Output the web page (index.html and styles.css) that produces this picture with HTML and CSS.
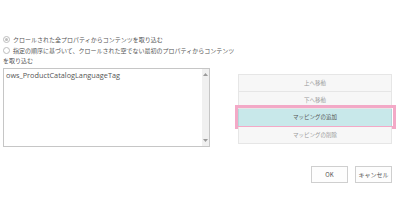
FILE: index.html
```html
<!DOCTYPE html>
<html lang="ja">
<head>
<meta charset="utf-8">
<link rel="stylesheet" href="styles.css">
</head>
<body>
<div class="page">
  <div class="main">
    <div class="left">
      <div class="opt"><span class="radio checked"></span>クロールされた全プロパティからコンテンツを取り込む</div>
      <div class="opt"><span class="radio"></span>指定の順序に基づいて、クロールされた空でない最初のプロパティからコンテンツを取り込む</div>
      <div class="list">
        <div class="list-text">ows_ProductCatalogLanguageTag</div>
        <div class="scroll">
          <svg width="5" height="3" viewBox="0 0 5 3"><path d="M0 3 L2.5 0 L5 3Z" fill="#9a9a9a"/></svg>
          <svg width="5" height="3" viewBox="0 0 5 3"><path d="M0 0 L2.5 3 L5 0Z" fill="#9a9a9a"/></svg>
        </div>
      </div>
    </div>
    <div class="right">
      <div class="btn">上へ移動</div>
      <div class="btn">下へ移動</div>
      <div class="btn active">マッピングの追加<span class="mark"></span></div>
      <div class="btn">マッピングの削除</div>
    </div>
  </div>
  <div class="footer">
    <div class="fbtn">OK</div>
    <div class="fbtn">キャンセル</div>
  </div>
</div>
</body>
</html>
```
FILE: styles.css
```css
html, body {
  margin: 0;
  padding: 0;
  background: #ffffff;
}
body {
  width: 400px;
  height: 215px;
  overflow: hidden;
  font-family: "Noto Sans CJK JP", "Noto Sans", sans-serif;
  font-size: 6px;
  color: #555555;
}
.page {
  padding: 35px 0 0 3px;
}
.main {
  display: flex;
}
.left {
  width: 234px;
}
.opt {
  line-height: 10px;
  margin-bottom: 0.5px;
}
.radio {
  display: inline-block;
  width: 7px;
  height: 7px;
  border: 1px solid #bdbdbd;
  border-radius: 50%;
  box-sizing: border-box;
  vertical-align: -1px;
  margin-right: 3px;
  background: #fff;
  position: relative;
}
.radio.checked::after {
  content: "";
  position: absolute;
  left: 1px;
  top: 1px;
  width: 3px;
  height: 3px;
  border-radius: 50%;
  background: #bdbdbd;
}
.list {
  margin-top: 2px;
  width: 207px;
  height: 79px;
  border: 1px solid #c6c6c6;
  box-sizing: border-box;
  display: flex;
}
.list-text {
  flex: 1;
  padding: 1px 2px;
  font-family: "Open Sans", "Noto Sans", sans-serif;
  font-size: 7.3px;
  color: #555;
  line-height: 10px;
}
.scroll {
  width: 7px;
  background: #f0f0f0;
  display: flex;
  flex-direction: column;
  justify-content: space-between;
  align-items: center;
  padding: 4px 0;
}
.right {
  padding: 39px 0 0 1px;
  width: 154px;
}
.btn {
  position: relative;
  height: 16px;
  line-height: 16px;
  text-align: center;
  background: #f7f7f7;
  border: 1px solid #e6e6e6;
  border-top-width: 0;
  font-size: 5.5px;
  color: #999999;
}
.btn:first-child {
  border-top-width: 1px;
}
.btn.active {
  background: #c8e8ea;
  border-color: #b4d8da;
  color: #555;
  height: 17px;
  line-height: 17px;
}
.mark {
  position: absolute;
  left: -4px;
  right: -5px;
  top: -4px;
  bottom: -3px;
  border: 3px solid #f3a9c7;
}
.footer {
  display: flex;
  justify-content: flex-end;
  gap: 7px;
  padding: 19px 8px 0 0;
}
.fbtn {
  width: 37px;
  height: 17px;
  box-sizing: border-box;
  border: 1px solid #cfcfcf;
  background: #fdfdfd;
  text-align: center;
  line-height: 15px;
  font-size: 6px;
  color: #555;
}
```
